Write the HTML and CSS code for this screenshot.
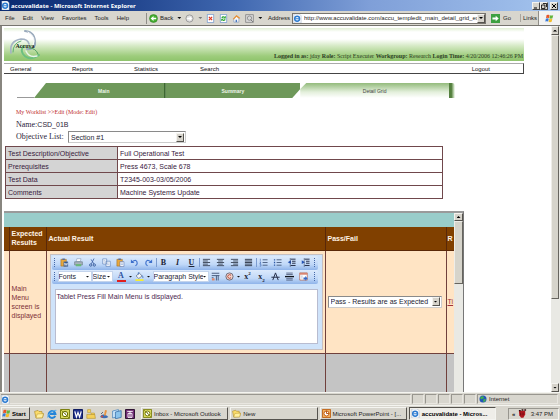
FILE: index.html
```
<!DOCTYPE html>
<html lang="en">
<head>
<meta charset="utf-8">
<title>accuvalidate - Microsoft Internet Explorer</title>
<link rel="stylesheet" href="styles.css">
</head>
<body>
<svg class="sprite" aria-hidden="true">
  <symbol id="ie" viewBox="0 0 10 10"><path d="M1 0h6l2 2v8H1z" fill="#fff" stroke="#8aa0c0" stroke-width=".5"/><circle cx="4.6" cy="5.3" r="2.7" fill="none" stroke="#2a7ad0" stroke-width="1.6"/><path d="M2.4 5.3h4.8" stroke="#2a7ad0" stroke-width="1.1"/></symbol>
  <symbol id="eglobe" viewBox="0 0 10 10"><path d="M8.2 6.8A3.4 3.4 0 1 1 8.4 5H3" fill="none" stroke="#2484d8" stroke-width="2"/><path d="M.6 8.6C0 6 6 .5 9.4 1.4" fill="none" stroke="#5ab0ec"/></symbol>
  <symbol id="folder" viewBox="0 0 10 10"><path d="M.6 2.4 4 1.4l1 1.1h3v2l1.6.2-1.2 4L2 9z" fill="#fbdc6a" stroke="#a88420" stroke-width=".6"/><path d="M2 9l1.2-4 6.2-.4-1 4.2z" fill="#fff0a0" stroke="#b8942c" stroke-width=".5"/></symbol>
  <symbol id="outlook" viewBox="0 0 10 10"><path d="M.5.5h9v9h-9z" fill="#d8d860" stroke="#7c8010"/><circle cx="5" cy="5" r="2.7" fill="#fff" stroke="#6c7000"/><path d="M5 3.4V5l1.3.6M1 1l8 8" stroke="#6c7000" stroke-width=".7" fill="none"/></symbol>
  <symbol id="flag" viewBox="0 0 10 10"><path d="M1.8 1.2q1.6-.8 3.2 0L4.3 4.6q-1.5-.8-3.2 0z" fill="#e85428"/><path d="M5.5 1.4q1.6.8 3.6 0l-.8 3.4q-1.7.8-3.5 0z" fill="#64b43c"/><path d="M1 5.2q1.7-.8 3.2 0l-.7 3.2q-1.6-.8-3.2 0z" fill="#3878d8"/><path d="M4.7 5.4q1.8.8 3.5 0l-.8 3.3q-1.7.8-3.4 0z" fill="#f4bc28"/></symbol>
  <symbol id="paste" viewBox="0 0 10 10"><path d="M1 1.5h6V9H1z" fill="#e9a83c" stroke="#9a6a20" stroke-width=".6"/><path d="M2.6.6h2.8v1.6H2.6z" fill="#596a94"/><path d="M4.4 4h4.4v5.5H4.4z" fill="#fff" stroke="#4c68a8" stroke-width=".6"/><path d="M5.3 5.6h2.5M5.3 7.4h2.5" stroke="#5c80c0" stroke-width=".6"/></symbol>
  <symbol id="paste-word" viewBox="0 0 10 10"><path d="M1 1.5h6V9H1z" fill="#e9a83c" stroke="#9a6a20" stroke-width=".6"/><path d="M2.6.6h2.8v1.6H2.6z" fill="#596a94"/><path d="M4 4h5v5.5H4z" fill="#35588f"/><path d="M4.8 5.3l.8 3 1-2.6 1 2.6.8-3" stroke="#fff" stroke-width=".7" fill="none"/></symbol>
  <symbol id="print" viewBox="0 0 10 10"><path d="M3.2.8h4.6L6.9 4H2.4z" fill="#fff" stroke="#6a80a0" stroke-width=".5"/><path d="M.7 4.2h8.6v3.6H.7z" fill="#a8b4bc" stroke="#5c6c78" stroke-width=".6"/><path d="M2 6.8h6v2.4H2z" fill="#69b878"/></symbol>
  <symbol id="cut" viewBox="0 0 10 10"><path d="M6.7.6 3.8 6.5M3.5 1.6l3 5" stroke="#4466a8" stroke-width="1" fill="none"/><circle cx="3" cy="7.8" r="1.3" fill="none" stroke="#375a9c"/><circle cx="7" cy="7.8" r="1.3" fill="none" stroke="#375a9c"/></symbol>
  <symbol id="copy" viewBox="0 0 10 10"><path d="M.8 1h4.4v5.7H.8zM4.4 3.6h4.8v5.7H4.4z" fill="#fff" stroke="#587cb8" stroke-width=".7"/><path d="M1.8 3h2M1.8 4.6h2M5.4 5.6h2.7M5.4 7.4h2.7" stroke="#7798cc" stroke-width=".6"/></symbol>
  <symbol id="undo" viewBox="0 0 10 10"><path d="M2 4.4q5.8-4 6 1.4 0 2-2 2.8" fill="none" stroke="#3d70cc" stroke-width="1.3"/><path d="M1 1.6v4h4z" fill="#3d70cc"/></symbol>
  <symbol id="redo" viewBox="0 0 10 10"><path d="M8 4.4q-5.8-4-6 1.4 0 2 2 2.8" fill="none" stroke="#3d70cc" stroke-width="1.3"/><path d="M9 1.6v4H5z" fill="#3d70cc"/></symbol>
  <symbol id="al" viewBox="0 0 10 10"><path d="M1 1.5h8M1 3.3h5.5M1 5h8M1 6.8h5.5M1 8.5h8" stroke="#3a4456" stroke-width="1"/></symbol>
  <symbol id="ac" viewBox="0 0 10 10"><path d="M1 1.5h8M2.4 3.3h5.2M1 5h8M2.4 6.8h5.2M1 8.5h8" stroke="#3a4456" stroke-width="1"/></symbol>
  <symbol id="ar" viewBox="0 0 10 10"><path d="M1 1.5h8M3.5 3.3H9M1 5h8M3.5 6.8H9M1 8.5h8" stroke="#3a4456" stroke-width="1"/></symbol>
  <symbol id="aj" viewBox="0 0 10 10"><path d="M1 1.5h8M1 3.3h8M1 5h8M1 6.8h8M1 8.5h8" stroke="#3a4456" stroke-width="1.1"/></symbol>
  <symbol id="ol" viewBox="0 0 10 10"><path d="M4 2h5.5M4 5h5.5M4 8h5.5" stroke="#46597c"/><path d="M1.5.8v2.4M.8 4.4h1.4L.9 6h1.4M.8 7h1.4v2H.8" stroke="#2c58a8" stroke-width=".6" fill="none"/></symbol>
  <symbol id="ul" viewBox="0 0 10 10"><path d="M4 2h5.5M4 5h5.5M4 8h5.5" stroke="#46597c"/><path d="M1 1.3h1.4v1.4H1zM1 4.3h1.4v1.4H1zM1 7.3h1.4v1.4H1z" fill="#2c58a8"/></symbol>
  <symbol id="out" viewBox="0 0 10 10"><path d="M4 1.3h5.5M5.6 3.6h3.9M5.6 5.8h3.9M4 8.3h5.5" stroke="#26304a" stroke-width="1.1"/><path d="M4.4 2.6v4L.8 4.6z" fill="#2454b8"/><path d="M3.6 0v10" stroke="#26304a" stroke-width=".5"/></symbol>
  <symbol id="in" viewBox="0 0 10 10"><path d="M4 1.3h5.5M5.6 3.6h3.9M5.6 5.8h3.9M4 8.3h5.5" stroke="#26304a" stroke-width="1.1"/><path d="M.8 2.6v4l3.6-2z" fill="#2454b8"/><path d="M3.6 0v10" stroke="#26304a" stroke-width=".5"/></symbol>
  <symbol id="bucket" viewBox="0 0 10 10"><path d="M1.2 4.4 4.8 1.2l3 3.2-3.6 2.8z" fill="#f4f6fa" stroke="#5c6c84" stroke-width=".8"/><path d="M3.6 3V.8h1.2M7.6 3.8q1.6.6 1.2 3" fill="none" stroke="#3c6cb8" stroke-width=".9"/><path d="M.5 8h9v2h-9z" fill="#f6ee30"/></symbol>
  <symbol id="rows" viewBox="0 0 10 10"><path d="M.8 1.4h8.4M.8 4h4M.8 6.4h2" stroke="#415274"/><path d="M4.6 4h4.8M6 4v5.4M8 4v5.4" stroke="#415274"/><path d="M1 7h3v2.4H1z" fill="#e08868"/></symbol>
  <symbol id="copyr" viewBox="0 0 10 10"><circle cx="5" cy="5" r="4" fill="#f0d4cc" stroke="#6a6470"/><path d="M6.7 3.8a2 2 0 1 0 0 2.4" fill="none" stroke="#b84838" stroke-width="1.1"/></symbol>
  <symbol id="strike" viewBox="0 0 10 10"><path d="M2 9 5 1l3 8M.4 5.8h9.2" fill="none" stroke="#26304a" stroke-width="1.1"/></symbol>
  <symbol id="rule" viewBox="0 0 10 10"><path d="M1.4 1.2h7.2M1.4 2.8h7.2M1.4 7.4h7.2M1.4 9h7.2" stroke="#4a5878" stroke-width=".9"/><path d="M0 5.1h10" stroke="#10141c" stroke-width="1.5"/></symbol>
  <symbol id="cal" viewBox="0 0 10 10"><path d="M.8 1h8.4v8H.8z" fill="#fff" stroke="#b0604c" stroke-width=".8"/><path d="M.8 1h8.4v2H.8z" fill="#d88470"/><path d="M2.2 4.6h2M2.2 6.6h2" stroke="#98a8c8" stroke-width=".7"/><path d="M5 6h2V4.4l2.6 2.8L7 9.6V8.2H5z" fill="#3468c8"/></symbol>
</svg>

<header class="titlebar">
  <svg class="i9"><use href="#ie"/></svg>
  <span class="caption">accuvalidate - Microsoft Internet Explorer</span>
  <button class="winbtn" aria-label="Minimize"><svg viewBox="0 0 6 6"><path d="M1 5h3" stroke="#000"/></svg></button>
  <button class="winbtn" aria-label="Restore"><svg viewBox="0 0 6 6"><path d="M2 .5h3.5V4M.5 2h3.4v3.5H.5z" fill="none" stroke="#000" stroke-width=".8"/></svg></button>
  <button class="winbtn close" aria-label="Close"><svg viewBox="0 0 6 6"><path d="M1 1l4 4M5 1 1 5" stroke="#000"/></svg></button>
</header>

<div class="menubar">
  <nav class="menus"><button>File</button><button>Edit</button><button>View</button><button>Favorites</button><button>Tools</button><button>Help</button></nav>
  <div class="navtools">
    <button class="back"><svg class="i9" viewBox="0 0 10 10"><circle cx="5" cy="5" r="4.4" fill="#45b030" stroke="#2a7a20" stroke-width=".6"/><path d="M8 4.2H5V2.2L1.8 5 5 7.8v-2h3z" fill="#fff"/></svg>Back</button>
    <i class="tri"></i>
    <button aria-label="Forward"><svg class="i9" viewBox="0 0 10 10"><circle cx="5" cy="5" r="4" fill="#dedede" stroke="#909090" stroke-width=".9"/><path d="M2.4 4.3h2.8V2.6L8 5 5.2 7.4V5.7H2.4z" fill="#fff"/></svg></button>
    <i class="tri dim"></i>
    <button aria-label="Stop"><svg class="i9" viewBox="0 0 10 10"><path d="M1.5.5h7v9h-7z" fill="#fff" stroke="#5c88c8" stroke-width=".7"/><path d="M3.2 3.2l3.6 3.6M6.8 3.2 3.2 6.8" stroke="#e03820" stroke-width="1.4"/></svg></button>
    <button aria-label="Refresh"><svg class="i9" viewBox="0 0 10 10"><path d="M1.5.5h7v9h-7z" fill="#fff" stroke="#5c88c8" stroke-width=".7"/><path d="M3.2 4.4q.8-2 3-.8M6.8 5.8q-.8 2-3 .8" fill="none" stroke="#20a028" stroke-width="1.3"/><path d="M7.5 2v3H4.8zM2.5 8V5.2h2.7z" fill="#20a028"/></svg></button>
    <button aria-label="Home"><svg class="i9" viewBox="0 0 10 10"><path d="M2 5v4h5.6V4.6L4.8 2.4z" fill="#f8f8f8" stroke="#7090c0" stroke-width=".6"/><path d="M.8 5.6 5 1.2l4.2 3.2-1.2.8L5 3 2 6z" fill="#ec9030"/><path d="M4 6.4h1.6V9H4z" fill="#4878c0"/></svg></button>
    <button aria-label="Edit page"><svg class="i9" viewBox="0 0 10 10"><path d="M.7.7h8.6v8.6H.7z" fill="#d8d8d8" stroke="#858585" stroke-width=".9"/><circle cx="5" cy="4.6" r="2.4" fill="none" stroke="#8c8c8c"/><path d="M6.2 6.2l2.6 2.6" stroke="#707070"/></svg></button>
    <i class="tri"></i>
  </div>
  <label class="addrlabel" for="addr">Address</label>
  <div class="addrbox"><svg class="i9"><use href="#ie"/></svg><input id="addr" value="http://www.accuvalidate.com/accu_templedit_main_detail_grid_ex"><button class="cap" aria-label="Show addresses"></button></div>
  <button class="go"><svg class="i9" viewBox="0 0 10 10"><path d="M0 0h10v10H0z" fill="#3ca040"/><path d="M1.6 4h3.6V2L8.6 5 5.2 8V6H1.6z" fill="#fff"/></svg>Go</button>
  <a class="links" href="#">Links</a>
  <div class="throb"><svg class="i9"><use href="#flag"/></svg></div>
</div>

<div class="window">
  <main class="page">
    <div class="banner">
      <svg class="logo" viewBox="0 0 34 32">
        <g fill="none" stroke-linecap="round">
          <path d="M17 2q11 1 10 14-2 5-8 4" stroke="#9aaabc" stroke-width="2"/>
          <path d="M20 3q9 5 5 13" stroke="#fff"/>
          <path d="M3 24Q1 12 13 10q7 0 8 5" stroke="#a4b2c4" stroke-width="1.6"/>
          <path d="M5 23q0-9 8-11" stroke="#5fae74"/>
          <path d="M31 26q-10 7-16-1-3-5 1-8" stroke="#6cc080" stroke-width="2"/>
          <path d="M29 27q-8 2-11-5" stroke="#e8f4ec" stroke-width="1.4"/>
          <path d="M21 19q7 0 9 6" stroke="#4c9c60"/>
        </g>
        <text x="17" y="19" text-anchor="middle" class="logotext">Accuva</text>
      </svg>
      <p class="session"><b>Logged in as:</b> jday <b>Role:</b> Script Executer <b>Workgroup:</b> Research <b>Login Time:</b> 4/20/2006 12:46:26 PM</p>
    </div>
    <nav class="mainnav"><a href="#">General</a><a href="#">Reports</a><a href="#">Statistics</a><a href="#">Search</a><a class="logout" href="#">Logout</a></nav>
    <nav class="tabs"><i class="lead"></i><a class="tab first" href="#">Main</a><a class="tab second" href="#">Summary</a><a class="tab current" href="#">Detail Grid</a><i class="tail"></i></nav>

    <section class="info">
      <p class="crumbs">My Worklist &gt;&gt;Edit (Mode: Edit)</p>
      <p class="name">Name:<span>CSD_01B</span></p>
      <div class="objective"><label for="obj">Objective List:</label><div class="pick wide"><select id="obj"><option>Section #1</option></select><i class="cap"></i></div></div>
    </section>

    <table class="details">
      <tr><th scope="row">Test Description/Objective</th><td>Full Operational Test</td></tr>
      <tr><th scope="row">Prerequisites</th><td>Press 4673, Scale 678</td></tr>
      <tr><th scope="row">Test Data</th><td>T2345-003-03/05/2006</td></tr>
      <tr><th scope="row">Comments</th><td>Machine Systems Update</td></tr>
    </table>

    <section class="gridframe">
      <div class="gridview">
        <div class="teal"></div>
        <table class="grid">
          <colgroup><col class="c0"><col class="c1"><col class="c2"><col class="c3"><col></colgroup>
          <thead><tr><th></th><th>Expected Results</th><th>Actual Result</th><th>Pass/Fail</th><th>R</th></tr></thead>
          <tbody>
            <tr class="row"><td></td><td>Main Menu screen is displayed</td>
              <td class="edcell">
                <div class="editor">
                  <div class="tools">
                    <div class="bar">
                      <i class="grip"></i>
                      <button aria-label="Paste from Word"><svg><use href="#paste-word"/></svg></button><button aria-label="Print"><svg><use href="#print"/></svg></button><button aria-label="Cut"><svg><use href="#cut"/></svg></button><button aria-label="Copy"><svg><use href="#copy"/></svg></button><button aria-label="Paste"><svg><use href="#paste"/></svg></button><button aria-label="Undo"><svg><use href="#undo"/></svg></button><button aria-label="Redo"><svg><use href="#redo"/></svg></button>
                      <i class="sep"></i>
                      <button class="glyph"><b>B</b></button><button class="glyph"><b><em>I</em></b></button><button class="glyph"><b><u>U</u></b></button>
                      <i class="sep"></i>
                      <button aria-label="Align left"><svg><use href="#al"/></svg></button><button aria-label="Center"><svg><use href="#ac"/></svg></button><button aria-label="Align right"><svg><use href="#ar"/></svg></button><button aria-label="Justify"><svg><use href="#aj"/></svg></button>
                      <i class="sep"></i>
                      <button aria-label="Numbered list"><svg><use href="#ol"/></svg></button><button aria-label="Bulleted list"><svg><use href="#ul"/></svg></button><button aria-label="Outdent"><svg><use href="#out"/></svg></button><button aria-label="Indent"><svg><use href="#in"/></svg></button>
                      <i class="grip"></i>
                    </div>
                    <div class="bar">
                      <i class="grip"></i>
                      <div class="mini fonts"><select aria-label="Font"><option>Fonts</option></select><i class="tri"></i></div>
                      <div class="mini size"><select aria-label="Size"><option>Size</option></select><i class="tri"></i></div>
                      <button class="glyph color"><b>A</b></button><i class="tri"></i>
                      <button class="after" aria-label="Highlight"><svg><use href="#bucket"/></svg></button><i class="tri"></i>
                      <div class="mini para"><select aria-label="Paragraph style"><option>Paragraph Style</option></select><i class="tri"></i></div>
                      <button aria-label="Line break"><svg><use href="#rows"/></svg></button><button aria-label="Symbol"><svg><use href="#copyr"/></svg></button><i class="tri"></i>
                      <button class="glyph script"><b>x<sup>2</sup></b></button><button class="glyph script"><b>x<sub>2</sub></b></button><button aria-label="Strikethrough"><svg><use href="#strike"/></svg></button><button aria-label="Horizontal rule"><svg><use href="#rule"/></svg></button><button aria-label="Insert date"><svg><use href="#cal"/></svg></button>
                      <i class="grip"></i>
                    </div>
                  </div>
                  <textarea aria-label="Actual Result">Tablet Press Fill Main Menu is displayed.</textarea>
                </div>
              </td>
              <td class="pf"><div class="pick"><select aria-label="Pass/Fail"><option>Pass - Results are as Expected</option></select><i class="cap"></i></div></td>
              <td><a href="#">Ti</a></td></tr>
            <tr class="alt"><td></td><td></td><td></td><td></td><td></td></tr>
          </tbody>
        </table>
      </div>
      <div class="scroll inner"><button class="cap up" aria-label="Scroll up"></button><i class="thumb"></i></div>
    </section>
  </main>
  <div class="scroll outer"><button class="cap up" aria-label="Scroll up"></button><i class="thumb"></i><button class="cap" aria-label="Scroll down"></button></div>
</div>

<div class="status">
  <div class="pane grow"><svg class="i9"><use href="#ie"/></svg></div>
  <i class="pane"></i><i class="pane"></i><i class="pane"></i><i class="pane"></i><i class="pane"></i>
  <div class="pane zone"><svg class="i8" viewBox="0 0 10 10"><circle cx="5" cy="5" r="4.4" fill="#2454b8"/><path d="M2 2.4q3-1.6 4 .2T4 5q-2 .6-2.6-.8zM6 5q3-.6 2.4 1.6T5.6 9q-1-2 .4-4z" fill="#40b050"/></svg>Internet</div>
</div>

<footer class="taskbar">
  <button class="start"><svg class="i9"><use href="#flag"/></svg>Start</button>
  <div class="quick">
    <button aria-label="Folder"><svg><use href="#folder"/></svg></button>
    <button aria-label="Internet Explorer"><svg><use href="#eglobe"/></svg></button>
    <button aria-label="Outlook"><svg><use href="#outlook"/></svg></button>
    <button aria-label="Word"><svg viewBox="0 0 10 10"><path d="M.5.5h9v9h-9z" fill="#20308c" stroke="#101c60"/><path d="M1.8 2.4 3.4 8 5 3.6 6.6 8l1.6-5.6" fill="none" stroke="#fff" stroke-width="1.2"/></svg></button>
    <button aria-label="Explorer"><svg viewBox="0 0 10 10"><path d="M1.6.6h3v3h-3zM5 4h3.4v1.8H5z" fill="#f8d860" stroke="#b08c28" stroke-width=".5"/><path d="M.8 5.4h8l.6 4H.8z" fill="#f4d058" stroke="#a88420" stroke-width=".5"/></svg></button>
    <button aria-label="Paint"><svg viewBox="0 0 10 10"><path d="M1 8q1-3 4-2.4T9.4 8q-4 2.4-8.4 0z" fill="#3c6cb4"/><path d="M5 6.6 6 1l2 .6-1.4 5z" fill="#e89440"/><circle cx="3" cy="7.6" r="1" fill="#d84838"/><path d="M2 5l2-2" stroke="#606878"/></svg></button>
    <button aria-label="Desktop"><svg viewBox="0 0 10 10"><path d="M.6 2 6.4.6v6.8L.6 9z" fill="#cfe8fa" stroke="#407cb8" stroke-width=".7"/><path d="M3.4 3 9.2 1.6v6.8L3.4 9.8z" fill="#8cc4ec" stroke="#2c64a0" stroke-width=".7"/></svg></button>
    <button aria-label="Publisher"><svg viewBox="0 0 10 10"><path d="M.5.5h9v9h-9z" fill="#702c74" stroke="#301434"/><path d="M2.2 2.4h5.6M3 4.4h4v4H3zM5 2v6" fill="none" stroke="#fff" stroke-width=".9"/></svg></button>
  </div>
  <div class="tasks">
    <button class="task"><svg class="i9"><use href="#outlook"/></svg>Inbox - Microsoft Outlook</button>
    <button class="task"><svg class="i9"><use href="#folder"/></svg>New</button>
    <button class="task"><svg class="i9" viewBox="0 0 10 10"><path d="M.5.5h9v9h-9z" fill="#f0b060" stroke="#c06010"/><circle cx="5" cy="5" r="2.8" fill="#fff" stroke="#b85008"/><path d="M5 2v3h3" fill="none" stroke="#b85008"/></svg>Microsoft PowerPoint - [...</button>
    <button class="task active"><svg class="i9"><use href="#ie"/></svg>accuvalidate - Micros...</button>
  </div>
  <div class="tray"><b>«</b><svg class="i9" viewBox="0 0 10 10"><path d="M1 2h7v4L6 9.6H3.4L1.4 7z" fill="#b01820"/><path d="M1 1h2v1.6H1zM4 .4h2V2H4zM7 .4h2V2H7z" fill="#301010"/><path d="M3 4v3M5.6 4v3" stroke="#500810" stroke-width=".8"/></svg><time>3:47 PM</time></div>
</footer>
</body>
</html>
```

FILE: styles.css
```
* { box-sizing: border-box; }
html, body { height: 100%; }
body {
  margin: 0;
  display: flex;
  flex-direction: column;
  overflow: hidden;
  background: #d8d6ce;
  color: #1c1c1c;
  font: 6px/8px "Liberation Sans", Arial, sans-serif;
}
p { margin: 0; }
button, input, select, textarea {
  font: inherit;
  color: inherit;
  margin: 0;
  padding: 0;
  border: 0;
  border-radius: 0;
  background: none;
  appearance: none;
  outline: 0;
}
svg { display: block; flex: none; }
.sprite { position: absolute; width: 0; height: 0; }
.i9 { width: 9px; height: 9px; }
.i8 { width: 8px; height: 8px; }

.tri {
  flex: none;
  width: 4px;
  height: 2px;
  background: #111;
  clip-path: polygon(0 0, 100% 0, 50% 100%);
}
.dim { background: #777; }

/* Raised square button with a small arrow, shared by lists and scroll bars */
.cap {
  flex: none;
  display: grid;
  place-items: center;
  width: 8px;
  height: 9px;
  background: #d6d3cb;
  border: 1px solid #f4f3ef;
  border-right-color: #55534e;
  border-bottom-color: #55534e;
}
.cap::after {
  content: "";
  width: 4px;
  height: 2px;
  background: #000;
  clip-path: polygon(0 0, 100% 0, 50% 100%);
}
.cap.up::after { clip-path: polygon(50% 0, 100% 100%, 0 100%); }

/* Title bar */
.titlebar {
  flex: none;
  display: flex;
  align-items: center;
  height: 11px;
  padding: 0 2px 0 1px;
  background: linear-gradient(90deg, #0a2a70 0%, #1c3f88 20%, #4068b0 42%, #7f9fd8 66%, #a4c4ee 100%);
}
.caption { flex: 1; padding-left: 1px; color: #fff; font-family: "Noto Sans", sans-serif; font-weight: bold; }
.winbtn {
  display: grid;
  place-items: center;
  width: 8px;
  height: 8px;
  background: #d6d3cb;
  border: 1px solid #f4f3ef;
  border-right-color: #444;
  border-bottom-color: #444;
}
.winbtn svg { width: 6px; height: 6px; }
.close { margin-left: 2px; }

/* Menu and address bar */
.menubar {
  flex: none;
  display: flex;
  align-items: center;
  height: 15px;
  border-bottom: 1px solid #77756f;
}
.menus { display: flex; gap: 8px; width: 146px; padding-left: 5px; }
.navtools {
  display: flex;
  align-items: center;
  gap: 4px;
  width: 118px;
  height: 11px;
  padding-left: 2px;
  border-left: 1px solid #908e88;
}
.back { display: flex; align-items: center; gap: 2px; }
.addrlabel { width: 28px; padding-left: 4px; }
.addrbox {
  flex: 1;
  display: flex;
  align-items: center;
  height: 11px;
  background: #fff;
  border: 1px solid #77756f;
}
.addrbox input { flex: 1; min-width: 0; padding-left: 2px; }
.go { display: flex; align-items: center; gap: 3px; width: 34px; padding-left: 5px; }
.links {
  width: 18px;
  padding-left: 2px;
  color: inherit;
  text-decoration: none;
  border-left: 1px solid #a8a69f;
}
.throb {
  display: grid;
  place-items: center;
  align-self: stretch;
  width: 22px;
  background: #f2f2f2;
  border-left: 1px solid #908e88;
}

/* Browser window */
.window {
  flex: 1;
  min-height: 0;
  display: flex;
  border-left: 2px solid #88867f;
}
.page {
  flex: 1;
  min-width: 0;
  display: flex;
  flex-direction: column;
  background: #fff;
  padding: 2px 0 0 2px;
}
.scroll { flex: none; display: flex; flex-direction: column; background: #e9e9e4; }
.thumb {
  flex: none;
  background: #d6d4cb;
  border: 1px solid #eeede8;
  border-right-color: #66645e;
  border-bottom-color: #66645e;
}
.outer { width: 9px; padding-right: 1px; }
.outer .thumb { height: 72%; margin-bottom: auto; }
.inner { width: 9px; }
.inner .cap { width: 9px; height: 8px; }
.inner .thumb { height: 63px; }

/* Application banner and navigation */
.banner {
  flex: none;
  display: flex;
  justify-content: space-between;
  align-items: flex-end;
  height: 33px;
  margin-right: 27px;
  background: linear-gradient(#e2f0d6 0, #fff 4px, #fff 11px, #d4e9c4 18px, #9dcc7c 28px, #8fc46c);
}
.logo { width: 34px; height: 32px; margin-left: 4px; }
.logotext { font: bold 6px "Liberation Serif", serif; fill: #182818; }
.session { padding: 0 1px 1px; font-family: "Liberation Serif", serif; color: #2c3c24; white-space: nowrap; }
.mainnav {
  flex: none;
  display: flex;
  align-items: center;
  height: 11px;
  margin: 2px 27px 0 0;
  padding-left: 6px;
  border: solid #444;
  border-width: 1px 1px 1px 0;
  border-top-color: #aaa;
}
.mainnav a { width: 62px; color: #111; text-decoration: none; }
.mainnav a:nth-child(3) { width: 66px; }
.mainnav .logout { width: auto; margin-left: auto; padding-right: 33px; }

.tabs {
  flex: none;
  display: flex;
  align-items: stretch;
  height: 15px;
  margin: 9px 96px 0 13px;
  font-size: 5px;
}
.lead { width: 17px; border-bottom: 1px solid #999; }
.tab {
  flex: 119;
  display: grid;
  place-items: center;
  color: #eef6ea;
  font-weight: bold;
  text-decoration: none;
  background: #6e985a;
}
.first { padding-left: 10px; clip-path: polygon(12px 0, 100% 0, 100% 100%, 0 100%); border-right: 2px solid #3c6830; }
.second { flex: 134; clip-path: polygon(0 0, 100% 0, 100% 6px, calc(100% - 8px) 100%, 0 100%); }
.current {
  flex: 148;
  color: #444;
  font-weight: normal;
  background: linear-gradient(#93bb7c, #e3efdb 60%, #fff);
  clip-path: polygon(6px 0, 100% 0, 100% 100%, 0 100%, 0 6px);
}
.tail { width: 6px; background: linear-gradient(90deg, #55803f 0 40%, #c4dab8 80%, #fff); border-radius: 0 3px 0 0; }

/* Record information */
.info { flex: none; padding: 9px 12px 0; color: #2c2438; font-family: "Liberation Serif", serif; }
.crumbs { color: #c03030; line-height: 10px; }
.name { margin-top: 2px; font-size: 8px; line-height: 12px; }
.name span { font: 7px "Liberation Sans", sans-serif; }
.objective { display: flex; align-items: center; gap: 4px; font-size: 8px; line-height: 12px; }
.objective label { min-width: 48px; }
.pick {
  display: flex;
  align-items: center;
  height: 12px;
  padding: 0 1px;
  background: #fff;
  border: 1px solid #8a8a8a;
  border-right-color: #ccc;
  border-bottom-color: #ccc;
  color: #241c34;
  font: 7px/9px "Liberation Sans", sans-serif;
}
.pick select { flex: 1; min-width: 0; padding-left: 1px; white-space: nowrap; }
.wide { width: 118px; }

.details {
  flex: none;
  width: calc(100% - 109px);
  margin: 3px 0 0 1px;
  border-collapse: collapse;
  color: #38203c;
  font-size: 7px;
  line-height: 9px;
}
.details th, .details td {
  height: 13px;
  padding: 1px 2px;
  border: 1px solid #70484c;
  font-weight: normal;
  text-align: left;
}
.details th { width: 112px; background: #d4d4d4; }

/* Results grid */
.gridframe {
  flex: 1;
  min-height: 0;
  display: flex;
  margin: 12px 87px 0 0;
  border-top: 2px solid #9a9a9a;
  border-right: 1px solid #777;
}
.gridview { flex: 1; min-width: 0; overflow: hidden; background: #c4c4c4; }
.teal { height: 14px; background: #99cdca; }
.grid {
  width: 100%;
  table-layout: fixed;
  border-collapse: collapse;
  color: #803038;
  font-size: 7px;
  line-height: 9px;
}
.c0 { width: 5px; }
.c1 { width: 37px; }
.c2 { width: 279px; }
.c3 { width: 121px; }
.grid th, .grid td { padding: 0 2px; text-align: left; border-right: 1px solid #70403c; border-bottom: 1px solid #70403c; overflow: hidden; }
.grid th:first-child, .grid td:first-child { padding: 0; }
.grid th:last-child, .grid td:last-child { padding: 0 0 0 1px; border-right: 0; white-space: nowrap; }
.grid th { height: 23px; background: #804000; color: #fff4e8; border-color: #5a2808; }
.row td { background: #ffe4c4; }
.grid a { color: #a03038; }
.alt td { height: 50px; }
.grid .edcell { padding: 3px 2px 3px 3px; }
.grid .pf { padding: 0 4px 0 2px; }

/* Rich text editor */
.editor { background: #cfe3fa; border: 1px solid #c8c0c0; padding: 1px 4px 5px; }
.tools { width: 266px; margin-left: -3px; }
.bar {
  display: flex;
  align-items: center;
  height: 14px;
  padding: 0 1px;
  border-radius: 2px;
  background: linear-gradient(#dceafc, #c0d8f8 60%, #8fb4ea);
  color: #1c2436;
}
.bar button { flex: none; display: grid; place-items: center; width: 14px; height: 12px; }
.bar svg { width: 9px; height: 9px; }
.grip { flex: none; width: 3px; height: 9px; border-left: 1px dotted #4468a8; }
.bar .grip:first-child { margin: 0 1px; }
.bar .grip:last-child { margin-left: auto; }
.sep { flex: none; width: 1px; height: 9px; background: #7c9cd0; }
.bar .glyph { font: 8px/9px "Liberation Serif", serif; }
.bar .color { height: 11px; border-bottom: 2px solid #e02020; width: 9px; margin: 0 3px 0 4px; color: #2c50a0; }
.script sup, .script sub { font-size: 5px; line-height: 0; }
.mini { flex: none; display: flex; align-items: center; height: 11px; padding: 0 1px 0 0; background: #fff; border: 1px solid #c4d4ec; line-height: 8px; }
.mini select { flex: 1; min-width: 0; }
.fonts { width: 34px; }
.size { width: 21px; }
.para { width: 56px; margin-left: 2px; }
.editor textarea {
  display: block;
  width: 100%;
  height: 55px;
  margin-top: 5px;
  padding: 2px 1px;
  background: #fff;
  border: 1px solid #b8bcd0;
  color: #4c2850;
  resize: none;
  overflow: hidden;
}

/* Status bar and task bar */
.status { flex: none; display: flex; gap: 1px; height: 13px; padding: 1px 2px 1px 1px; border-top: 1px solid #f4f4f0; }
.pane { width: 12px; border: 1px solid #e8e6e0; border-top-color: #98968f; border-left-color: #98968f; }
.grow { flex: 1; display: flex; align-items: center; border-left: 0; }
.zone { display: flex; align-items: center; gap: 2px; width: 81px; padding-left: 1px; }
.taskbar {
  flex: none;
  display: flex;
  align-items: center;
  height: 15px;
  padding: 1px 1px 0;
  border-top: 1px solid #f4f4f0;
}
.start, .task {
  display: flex;
  align-items: center;
  height: 13px;
  border: 1px solid #f4f4f0;
  border-right-color: #55534e;
  border-bottom-color: #55534e;
}
.start { width: 29px; gap: 1px; font-weight: bold; color: #000; }
.quick { display: flex; width: 111px; padding-left: 3px; }
.quick button { width: 13px; height: 11px; padding-left: 1px; }
.quick svg { width: 10px; height: 10px; }
.tasks { flex: 1; display: flex; gap: 2px; min-width: 0; }
.task { flex: 1; min-width: 0; gap: 2px; padding-left: 1px; white-space: nowrap; }
.active {
  border-color: #55534e #f4f4f0 #f4f4f0 #55534e;
  background: #efeee9;
  color: #000;
  font-weight: bold;
}
.tray {
  display: flex;
  align-items: center;
  justify-content: space-between;
  width: 51px;
  height: 12px;
  margin-left: 12px;
  padding: 0 5px 0 3px;
  border: 1px solid #f4f4f0;
  border-top-color: #98968f;
  border-left-color: #98968f;
}
```
